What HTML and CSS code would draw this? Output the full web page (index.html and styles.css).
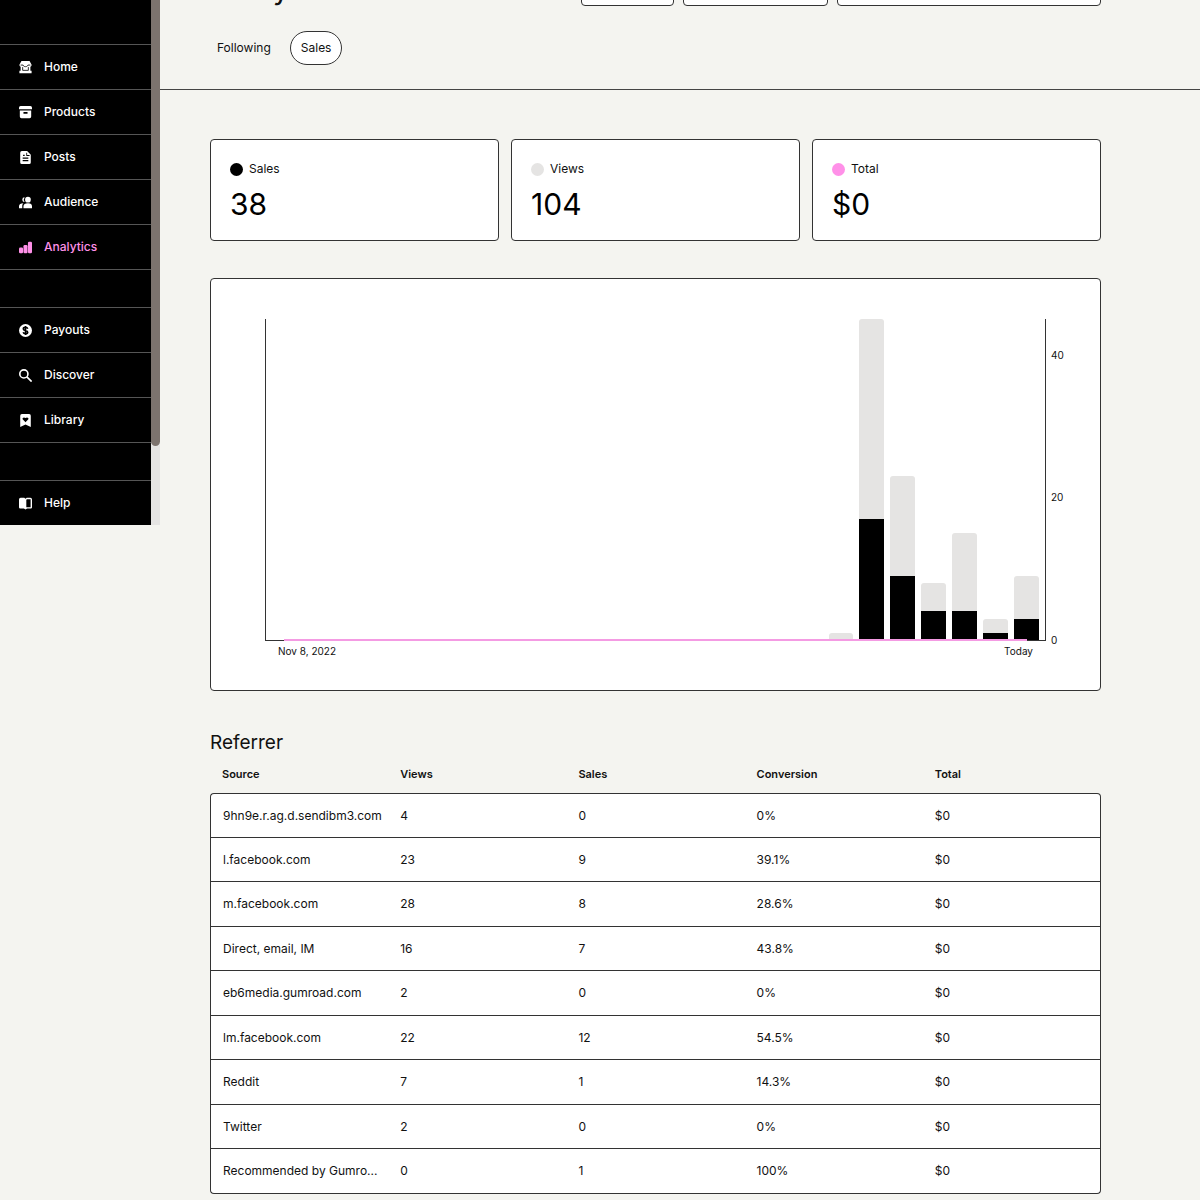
FILE: index.html
```html
<!DOCTYPE html>
<html lang="en">
<head>
    <meta charset="UTF-8">
    <meta name="viewport" content="width=device-width, initial-scale=1.0">
    <title>Analytics</title>
    <link rel="stylesheet" href="styles.css">
</head>
<body>
    <div class="layout">
        <aside class="sidebar">
            <nav class="nav">
                <div class="nav-group">
                    <a href="/home"><svg viewBox="0 0 16 16"><path d="M3 0h10l2.500 4.500A2.500 2.500 0 0 1 14 7v5h1.500v3H.5v-3H2V7A2.500 2.500 0 0 1 .5 4.500z"/><path class="cut thin" d="M2 5h3c.5 1.500 1.500 2 3 2s2.500-.5 3-2h3M4.500 7.500v4h7v-4"/></svg>Home</a>
                    <a href="/products"><svg viewBox="0 0 16 16"><path fill-rule="evenodd" d="M2 0h12a2 2 0 0 1 2 2v2H0V2a2 2 0 0 1 2-2zM1 5.500h14V13a2 2 0 0 1-2 2H3a2 2 0 0 1-2-2zM5.500 7.500v2h5v-2z"/></svg>Products</a>
                    <a href="/posts"><svg viewBox="0 0 16 16"><path fill-rule="evenodd" d="M3.500 0H10l4.500 4.500V14a2 2 0 0 1-2 2h-9a2 2 0 0 1-2-2V2a2 2 0 0 1 2-2zM9 2v4h4V5h-3V2zM5 4.500V6h2V4.500zM4.500 8v1.500h7V8zM4.500 11v1.500h7V11z"/></svg>Posts</a>
                    <a href="/audience"><svg viewBox="0 0 16 16"><circle cx="11" cy="4.500" r="3.500"/><path d="M5.500 15v-2.500c0-2 2-3.500 5.500-3.500s5 1.500 5 3.500V15zM7 1.500a5 5 0 0 0 0 6 3 3 0 1 1 0-6zM5.500 9C4.500 10 4 11 4 12.500V15H0v-2.500C0 10.500 2 9 5.500 9z"/></svg>Audience</a>
                    <a href="/analytics" class="active"><svg viewBox="0 0 16 16"><rect y="8" width="5" height="7" rx="1.500"/><rect x="5.500" y="5" width="5" height="10" rx="1.500"/><rect x="11" y="1" width="5" height="14" rx="1.500"/></svg>Analytics</a>
                </div>
                <div class="nav-group">
                    <a href="/payouts"><svg viewBox="0 0 16 16"><circle cx="8" cy="8" r="8"/><path class="cut" d="M10.800 5.800C10.300 4.500 9.300 4 8 4 6.500 4 5.300 4.700 5.300 6c0 2.700 5.400 1.300 5.400 4 0 1.300-1.200 2-2.700 2-1.400 0-2.500-.6-2.900-1.900M8 2.500v11"/></svg>Payouts</a>
                    <a href="/discover"><svg viewBox="0 0 16 16"><path class="line" d="M10 10l5.500 5.500M11 6A5 5 0 1 1 1 6a5 5 0 0 1 10 0z"/></svg>Discover</a>
                    <a href="/library"><svg viewBox="0 0 16 16"><path fill-rule="evenodd" d="M3.500 0h9a2 2 0 0 1 2 2v14L8 13l-6.500 3V2a2 2 0 0 1 2-2zM8 10l3.500-3.500C12.500 5 10 3 8 5 6 3 3.500 5 4.500 6.500z"/></svg>Library</a>
                </div>
                <div class="nav-group">
                    <a href="/help"><svg viewBox="0 0 16 16"><path fill-rule="evenodd" d="M2 1h4.500L8 2l1.500-1H14a2 2 0 0 1 2 2v9.500a1.500 1.500 0 0 1-1.500 1.500H10l-2 1.500L6 14H1.500A1.500 1.500 0 0 1 0 12.500V3a2 2 0 0 1 2-2zM9 3.500v9h5.300V2.700H10z"/></svg>Help</a>
                </div>
            </nav>
            <div class="scrollbar"><div class="thumb"></div></div>
        </aside>

        <main class="main">
            <header class="header">
                <div class="header-top">
                    <h1>Analytics</h1>
                    <div class="actions">
                        <button type="button" class="control" aria-label="Export"></button>
                        <select class="control" aria-label="Period"></select>
                        <button type="button" class="control" aria-label="Date range"></button>
                    </div>
                </div>
                <div class="tabs">
                    <a href="/analytics/following">Following</a>
                    <a href="/analytics/sales" class="selected">Sales</a>
                </div>
            </header>

            <div class="content">
                <!-- Totals -->
                <div class="stats">
                    <div class="card stat">
                        <h2><span class="dot sales"></span>Sales</h2>
                        <div class="value">38</div>
                    </div>
                    <div class="card stat">
                        <h2><span class="dot views"></span>Views</h2>
                        <div class="value">104</div>
                    </div>
                    <div class="card stat">
                        <h2><span class="dot total"></span>Total</h2>
                        <div class="value">$0</div>
                    </div>
                </div>

                <!-- Chart, scale goes up to 45 -->
                <div class="card chart">
                    <div class="plot">
                        <div class="bar" style="height: 2.22%"></div>
                        <div class="bar" style="height: 100%"><div class="fill" style="height: 37.78%"></div></div>
                        <div class="bar" style="height: 51.11%"><div class="fill" style="height: 39.13%"></div></div>
                        <div class="bar" style="height: 17.78%"><div class="fill" style="height: 50%"></div></div>
                        <div class="bar" style="height: 33.33%"><div class="fill" style="height: 26.67%"></div></div>
                        <div class="bar" style="height: 6.67%"><div class="fill" style="height: 33.33%"></div></div>
                        <div class="bar" style="height: 20%"><div class="fill" style="height: 33.33%"></div></div>
                        <div class="total-line"></div>
                        <span class="tick" style="bottom: 88.89%">40</span>
                        <span class="tick" style="bottom: 44.44%">20</span>
                        <span class="tick" style="bottom: 0%">0</span>
                    </div>
                    <div class="dates">
                        <span>Nov 8, 2022</span>
                        <span>Today</span>
                    </div>
                </div>

                <!-- Referrers -->
                <section class="referrers">
                    <h2 id="referrer">Referrer</h2>
                    <table aria-labelledby="referrer">
                        <thead>
                            <tr><th>Source</th><th>Views</th><th>Sales</th><th>Conversion</th><th>Total</th></tr>
                        </thead>
                        <tbody>
                            <tr><td>9hn9e.r.ag.d.sendibm3.com</td><td>4</td><td>0</td><td>0%</td><td>$0</td></tr>
                            <tr><td>l.facebook.com</td><td>23</td><td>9</td><td>39.1%</td><td>$0</td></tr>
                            <tr><td>m.facebook.com</td><td>28</td><td>8</td><td>28.6%</td><td>$0</td></tr>
                            <tr><td>Direct, email, IM</td><td>16</td><td>7</td><td>43.8%</td><td>$0</td></tr>
                            <tr><td>eb6media.gumroad.com</td><td>2</td><td>0</td><td>0%</td><td>$0</td></tr>
                            <tr><td>lm.facebook.com</td><td>22</td><td>12</td><td>54.5%</td><td>$0</td></tr>
                            <tr><td>Reddit</td><td>7</td><td>1</td><td>14.3%</td><td>$0</td></tr>
                            <tr><td>Twitter</td><td>2</td><td>0</td><td>0%</td><td>$0</td></tr>
                            <tr><td>Recommended by Gumro...</td><td>0</td><td>1</td><td>100%</td><td>$0</td></tr>
                        </tbody>
                    </table>
                </section>
            </div>
        </main>
    </div>
</body>
</html>
```
FILE: styles.css
```css
* {
    box-sizing: border-box;
}
body {
    margin: 0;
    background-color: #f4f4f0;
    color: #111;
    font-family: Inter, sans-serif;
    font-size: 12px;
    line-height: 18px;
}
h1, h2 {
    margin: 0;
    font-weight: 400;
}
a {
    color: inherit;
    text-decoration: none;
}
.layout {
    display: flex;
    align-items: flex-start;
}

/* Sidebar */
.sidebar {
    display: flex;
    width: 160px;
    flex-shrink: 0;
}
.nav {
    flex: 1;
    padding-top: 44px;
    background-color: #000;
    color: #fff;
    font-weight: 500;
}
.nav-group {
    border-bottom: 1px solid #555;
}
.nav-group + .nav-group {
    margin-top: 37px;
}
.nav-group:last-child {
    border-bottom: none;
}
.nav a {
    display: flex;
    align-items: center;
    gap: 12px;
    height: 45px;
    padding: 0 19px;
    border-top: 1px solid #555;
}
.nav a.active {
    color: #ff90e8;
}
.nav svg {
    width: 13px;
    height: 13px;
    fill: currentColor;
}
.nav .cut {
    fill: none;
    stroke: #000;
    stroke-width: 2;
}
.nav .thin {
    stroke-width: 1;
}
.nav .line {
    fill: none;
    stroke: currentColor;
    stroke-width: 2;
}
.scrollbar {
    width: 9px;
    background-color: #e5e4e3;
}
.thumb {
    height: 85%;
    border-radius: 0 0 5px 5px;
    background-color: #7c736e;
}

/* Header */
.main {
    flex: 1;
    margin-top: -36px;
}
.header {
    padding: 0 99px 24px 50px;
    border-bottom: 1px solid #444;
}
.header-top {
    display: flex;
    align-items: flex-end;
    justify-content: space-between;
}
h1 {
    font-size: 30px;
    line-height: 36px;
}
.actions {
    display: grid;
    grid-template-columns: 93px 145px 264px;
    gap: 9px;
}
.control {
    height: 42px;
    border: 1px solid #333;
    border-radius: 4px;
    background-color: #fff;
    appearance: none;
}
.tabs {
    display: flex;
    gap: 8px;
    margin: 25px 0 0 -4px;
}
.tabs a {
    padding: 7px 10px;
    border: 1px solid transparent;
    border-radius: 17px;
}
.tabs a.selected {
    border-color: #333;
    background-color: #fff;
}

/* Content */
.content {
    padding: 49px 99px 6px 50px;
}
.card {
    border: 1px solid #333;
    border-radius: 4px;
    background-color: #fff;
}
.stats {
    display: grid;
    grid-template-columns: repeat(3, 1fr);
    gap: 12px;
}
.stat {
    padding: 20px 19px 18px;
}
.stat h2 {
    display: flex;
    align-items: center;
    gap: 6px;
    font-size: 12px;
}
.dot {
    width: 13px;
    height: 13px;
    border-radius: 50%;
}
.dot.sales {
    background-color: #000;
}
.dot.views {
    background-color: #e5e4e3;
}
.dot.total {
    background-color: #ff90e8;
}
.value {
    margin-top: 8px;
    color: #000;
    font-size: 30px;
    line-height: 36px;
}

/* Chart */
.chart {
    margin-top: 37px;
    padding: 40px 54px 30px;
}
.plot {
    position: relative;
    display: grid;
    grid-template-columns: repeat(25, 1fr);
    align-items: end;
    gap: 6px;
    height: 322px;
    padding: 0 6px;
    border: 1px solid #333;
    border-top: none;
}
.bar {
    display: flex;
    align-items: flex-end;
    border-radius: 3px 3px 0 0;
    background-color: #e5e4e3;
}
.bar:first-child {
    grid-column-start: 19;
}
.fill {
    width: 100%;
    background-color: #000;
}
.total-line {
    position: absolute;
    right: 18px;
    bottom: -1px;
    left: 18px;
    height: 2px;
    background-color: #f49be3;
}
.tick {
    position: absolute;
    left: 100%;
    margin-left: 6px;
    font-size: 10px;
    transform: translateY(50%);
}
.dates {
    display: flex;
    justify-content: space-between;
    padding: 1px 13px 0;
    font-size: 10px;
}

/* Referrers */
.referrers {
    margin-top: 39px;
}
.referrers h2 {
    font-size: 19px;
    line-height: 26px;
}
table {
    width: 100%;
    border-spacing: 0;
    table-layout: fixed;
}
th {
    padding: 9px 12px 10px;
    font-size: 11px;
    font-weight: 600;
    text-align: left;
}
td {
    height: 44px;
    padding: 0 12px;
    border-bottom: 1px solid #333;
    background-color: #fff;
    white-space: nowrap;
}
tbody tr:nth-child(odd) td {
    height: 45px;
}
td:first-child {
    border-left: 1px solid #333;
}
td:last-child {
    border-right: 1px solid #333;
}
tbody tr:first-child td {
    border-top: 1px solid #333;
}
tbody tr:first-child td:first-child {
    border-top-left-radius: 4px;
}
tbody tr:first-child td:last-child {
    border-top-right-radius: 4px;
}
tbody tr:last-child td:first-child {
    border-bottom-left-radius: 4px;
}
tbody tr:last-child td:last-child {
    border-bottom-right-radius: 4px;
}
```
